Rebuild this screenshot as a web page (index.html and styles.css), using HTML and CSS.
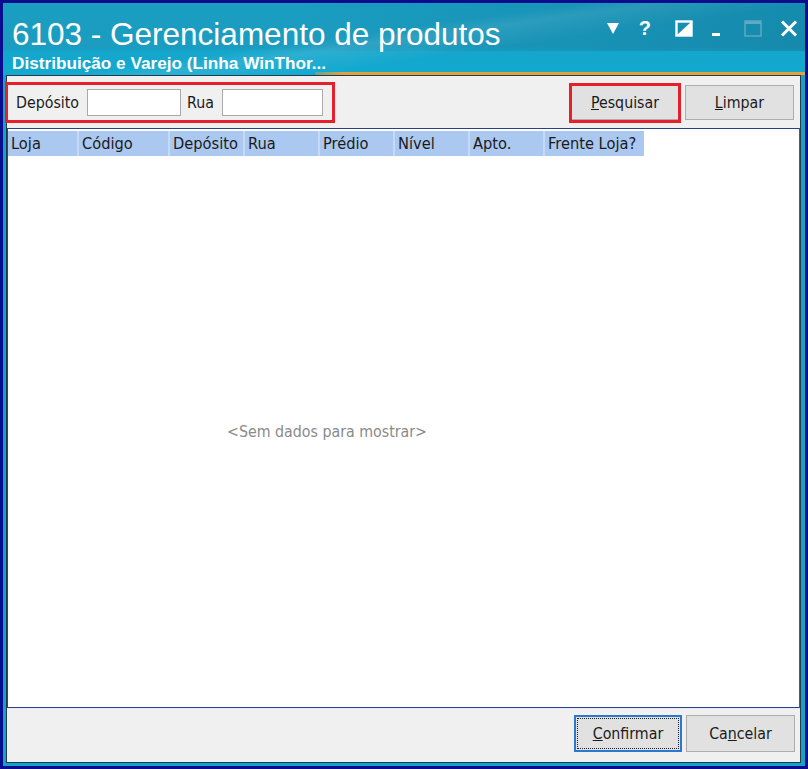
FILE: index.html
```html
<!DOCTYPE html>
<html lang="pt">
<head>
<meta charset="utf-8">
<title>6103 - Gerenciamento de produtos</title>
<link rel="stylesheet" href="styles.css">
</head>
<body>
<div class="window">
  <div class="titlebar">
    <div class="titles">
      <div class="title">6103 - Gerenciamento de produtos</div>
      <div class="subtitle">Distribuição e Varejo (Linha WinThor...</div>
    </div>
    <div class="controls">
      <svg class="ic ic-menu" width="14" height="14" viewBox="0 0 14 14"><path d="M1 2 H13 L7 13 Z" fill="#fff"/></svg>
      <span class="ic-q">?</span>
      <svg class="ic ic-half" width="18" height="17" viewBox="0 0 18 17"><rect x="1.5" y="1.5" width="15" height="14" fill="none" stroke="#fff" stroke-width="2.4"/><path d="M16 2 V15 H2 Z" fill="#fff"/></svg>
      <svg class="ic ic-min" width="10" height="17" viewBox="0 0 10 17"><rect x="1" y="13" width="8" height="3" fill="#fff"/></svg>
      <svg class="ic ic-max" width="18" height="17" viewBox="0 0 18 17"><rect x="1" y="1" width="16" height="15" fill="none" stroke="#5fa9c2" stroke-width="1.5"/><rect x="1" y="1" width="16" height="3" fill="#5fa9c2"/></svg>
      <svg class="ic ic-close" width="18" height="17" viewBox="0 0 18 17"><path d="M2 1.5 L16 15.5 M16 1.5 L2 15.5" stroke="#fff" stroke-width="3"/></svg>
    </div>
    <div class="accent"></div>
  </div>
  <div class="panel">
    <div class="toolbar">
      <div class="filters mark">
        <label class="lbl">Depósito</label>
        <input class="txt txt-dep" type="text">
        <label class="lbl">Rua</label>
        <input class="txt txt-rua" type="text">
      </div>
      <div class="spacer"></div>
      <div class="mark mark-btn">
        <button class="btn btn-search"><u>P</u>esquisar</button>
      </div>
      <button class="btn btn-clear"><u>L</u>impar</button>
    </div>
    <div class="grid">
      <div class="grid-head">
        <div class="col c-loja">Loja</div>
        <div class="col c-cod">Código</div>
        <div class="col c-n">Depósito</div>
        <div class="col c-n">Rua</div>
        <div class="col c-n">Prédio</div>
        <div class="col c-n">Nível</div>
        <div class="col c-n">Apto.</div>
        <div class="col c-fr">Frente Loja?</div>
      </div>
      <div class="grid-body">
        <span class="empty">&lt;Sem dados para mostrar&gt;</span>
      </div>
    </div>
    <div class="footer">
      <button class="btn btn-ok focused"><u>C</u>onfirmar</button>
      <button class="btn btn-cancel">Ca<u>n</u>celar</button>
    </div>
  </div>
</div>
</body>
</html>
```
FILE: styles.css
```css
* { box-sizing: border-box; }
html, body { margin: 0; padding: 0; }
body {
  width: 808px;
  height: 769px;
  overflow: hidden;
  font-family: "DejaVu Sans Condensed", "DejaVu Sans", sans-serif;
  font-stretch: condensed;
  font-size: 15.8px;
  color: #1b1b1b;
}
.window {
  width: 808px;
  height: 769px;
  border: 3px solid #0c0c8e;
  background: #12a3c6;
  display: flex;
  flex-direction: column;
}
.titlebar {
  position: relative;
  height: 72px;
  flex: none;
  display: flex;
  justify-content: space-between;
  background:
    linear-gradient(172deg, rgba(255,255,255,0) 0%, rgba(255,255,255,0) 44%, rgba(255,255,255,0.10) 50%, rgba(255,255,255,0) 62%),
    linear-gradient(180deg, #1a9ec2 0px, #1b9cc0 44px, #15a6cc 49px, #12aad0 72px);
}
.titlebar::before {
  content: "";
  position: absolute;
  right: 0; top: 0;
  width: 520px; height: 48px;
  background: linear-gradient(90deg, rgba(8,80,110,0) 0%, rgba(8,90,120,0.28) 100%);
  pointer-events: none;
}
.titles {
  padding: 13px 0 0 9px;
  position: relative;
  z-index: 1;
}
.title {
  font-family: "Liberation Sans", Arial, sans-serif;
  font-stretch: normal;
  font-size: 31.5px;
  line-height: 36px;
  color: #fff;
}
.subtitle {
  font-family: "Liberation Sans", Arial, sans-serif;
  font-stretch: normal;
  font-weight: bold;
  font-size: 17.2px;
  line-height: 20px;
  margin-top: 1px;
  color: #fff;
}
.controls {
  display: flex;
  align-items: center;
  height: 34px;
  margin-top: 8px;
  padding-right: 7px;
  position: relative;
  z-index: 1;
}
.ic { display: block; flex: none; }
.ic-q {
  font-family: "Liberation Sans", Arial, sans-serif;
  font-stretch: normal;
  font-weight: bold;
  font-size: 20px;
  color: #fff;
  margin-left: 19px;
}
.ic-half { margin-left: 24px; }
.ic-min { margin-left: 18px; }
.ic-max { margin-left: 23px; }
.ic-close { margin-left: 18px; }
.accent {
  position: absolute;
  left: 312px; right: 0; bottom: 0;
  height: 3px;
  background: linear-gradient(90deg, rgba(230,160,50,0.4), #e3a23a 6%, #e3a23a);
}
.panel {
  flex: 1;
  margin: 0 4px 3px 3px;
  border: 1px solid #24394a;
  background: #f0f0f0;
  display: flex;
  flex-direction: column;
}
.toolbar {
  height: 52px;
  flex: none;
  display: flex;
  align-items: center;
  padding-right: 6px;
}
.mark { border: 3px solid #e6202b; }
.filters {
  display: flex;
  align-items: center;
  height: 41px;
  width: 330px;
  margin-left: -2px;
  margin-top: 1px;
  padding-left: 8px;
}
.lbl { margin-right: 8px; }
.txt {
  height: 27px;
  border: 1px solid #a9a9a9;
  background: #fff;
  padding: 0;
  margin: 0 6px 0 0;
}
.txt-dep { width: 94px; }
.txt-rua { width: 101px; }
.spacer { flex: 1; }
.btn {
  font-family: inherit;
  font-stretch: condensed;
  font-size: 15.8px;
  color: #1b1b1b;
  background: #e1e1e1;
  border: 1px solid #adadad;
  padding: 0;
  height: 35px;
}
.mark-btn {
  height: 40px;
  width: 112px;
  display: flex;
  align-items: center;
  justify-content: center;
  overflow: hidden;
  margin-right: 4px;
  margin-top: 1px;
}
.btn-search { width: 108px; height: 35px; flex: none; }
.btn-clear { width: 109px; }
.grid {
  flex: 1;
  border: 1px solid #2b3f8c;
  border-right-color: #3a5ab8;
  background: #fff;
  display: flex;
  flex-direction: column;
  padding-top: 2px;
}
.grid-head {
  display: flex;
  height: 25px;
  flex: none;
}
.col {
  background: #aac8f0;
  border-right: 2px solid #c6daf6;
  line-height: 25px;
  padding-left: 3px;
  white-space: nowrap;
  overflow: hidden;
  font-size: 16.3px;
}
.c-loja { width: 71px; }
.c-cod { width: 91px; }
.c-n { width: 75px; }
.c-fr { width: 99px; border-right: none; }
.grid-body {
  flex: 1;
  display: flex;
  align-items: center;
  padding-left: 219px;
}
.empty { color: #8a8a8a; }
.footer {
  height: 54px;
  flex: none;
  display: flex;
  align-items: center;
  justify-content: flex-end;
  gap: 4px;
  padding-right: 5px;
  padding-bottom: 5px;
  border-top: 1px solid #e4e8f4;
}
.btn-ok { width: 108px; height: 37px; }
.btn-cancel { width: 109px; height: 37px; }
.focused {
  border: 2px solid #2a78d0;
  outline: 1px dotted #222;
  outline-offset: -4px;
}
```
